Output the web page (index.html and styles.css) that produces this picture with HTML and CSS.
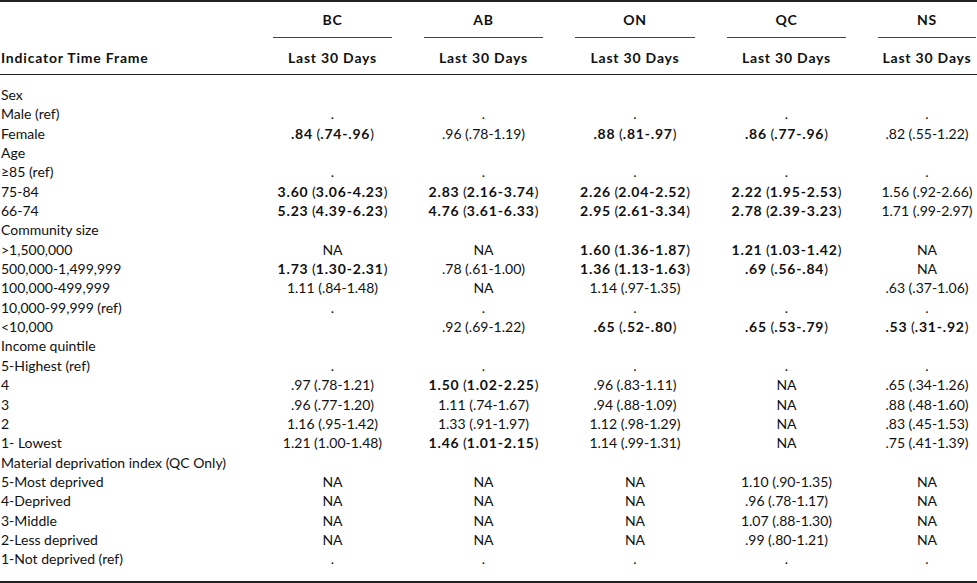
FILE: index.html
```html
<!DOCTYPE html>
<html lang="en">
<head>
<meta charset="utf-8">
<title>Indicator table</title>
<link rel="stylesheet" href="styles.css">
</head>
<body>
<table class="tbl">
  <colgroup>
    <col class="c-label"><col class="c-bc"><col class="c-ab"><col class="c-on"><col class="c-qc"><col class="c-ns">
  </colgroup>
  <thead>
    <tr class="h1">
      <th></th>
      <th><div class="grp">BC</div></th>
      <th><div class="grp">AB</div></th>
      <th><div class="grp">ON</div></th>
      <th><div class="grp">QC</div></th>
      <th><div class="grp">NS</div></th>
    </tr>
    <tr class="h2">
      <th class="lbl">Indicator Time Frame</th>
      <th>Last 30 Days</th>
      <th>Last 30 Days</th>
      <th>Last 30 Days</th>
      <th>Last 30 Days</th>
      <th>Last 30 Days</th>
    </tr>
  </thead>
  <tbody>
    <tr><td>Sex</td><td></td><td></td><td></td><td></td><td></td></tr>
    <tr><td>Male (ref)</td><td>.</td><td>.</td><td>.</td><td>.</td><td>.</td></tr>
    <tr><td>Female</td><td><b>.84</b> (<b>.74-.96</b>)</td><td>.96 (.78-1.19)</td><td><b>.88</b> (<b>.81-.97</b>)</td><td><b>.86</b> (<b>.77-.96</b>)</td><td>.82 (.55-1.22)</td></tr>
    <tr><td>Age</td><td></td><td></td><td></td><td></td><td></td></tr>
    <tr><td>&ge;85 (ref)</td><td>.</td><td>.</td><td>.</td><td>.</td><td>.</td></tr>
    <tr><td>75-84</td><td><b>3.60</b> (<b>3.06-4.23</b>)</td><td><b>2.83</b> (<b>2.16-3.74</b>)</td><td><b>2.26</b> (<b>2.04-2.52</b>)</td><td><b>2.22</b> (<b>1.95-2.53</b>)</td><td>1.56 (.92-2.66)</td></tr>
    <tr><td>66-74</td><td><b>5.23</b> (<b>4.39-6.23</b>)</td><td><b>4.76</b> (<b>3.61-6.33</b>)</td><td><b>2.95</b> (<b>2.61-3.34</b>)</td><td><b>2.78</b> (<b>2.39-3.23</b>)</td><td>1.71 (.99-2.97)</td></tr>
    <tr><td>Community size</td><td></td><td></td><td></td><td></td><td></td></tr>
    <tr><td>&gt;1,500,000</td><td>NA</td><td>NA</td><td><b>1.60</b> (<b>1.36-1.87</b>)</td><td><b>1.21</b> (<b>1.03-1.42</b>)</td><td>NA</td></tr>
    <tr><td>500,000-1,499,999</td><td><b>1.73</b> (<b>1.30-2.31</b>)</td><td>.78 (.61-1.00)</td><td><b>1.36</b> (<b>1.13-1.63</b>)</td><td><b>.69</b> (<b>.56-.84</b>)</td><td>NA</td></tr>
    <tr><td>100,000-499,999</td><td>1.11 (.84-1.48)</td><td>NA</td><td>1.14 (.97-1.35)</td><td></td><td>.63 (.37-1.06)</td></tr>
    <tr><td>10,000-99,999 (ref)</td><td>.</td><td>.</td><td>.</td><td>.</td><td>.</td></tr>
    <tr><td>&lt;10,000</td><td></td><td>.92 (.69-1.22)</td><td><b>.65</b> (<b>.52-.80</b>)</td><td><b>.65</b> (<b>.53-.79</b>)</td><td><b>.53</b> (<b>.31-.92</b>)</td></tr>
    <tr><td>Income quintile</td><td></td><td></td><td></td><td></td><td></td></tr>
    <tr><td>5-Highest (ref)</td><td>.</td><td>.</td><td>.</td><td>.</td><td>.</td></tr>
    <tr><td>4</td><td>.97 (.78-1.21)</td><td><b>1.50</b> (<b>1.02-2.25</b>)</td><td>.96 (.83-1.11)</td><td>NA</td><td>.65 (.34-1.26)</td></tr>
    <tr><td>3</td><td>.96 (.77-1.20)</td><td>1.11 (.74-1.67)</td><td>.94 (.88-1.09)</td><td>NA</td><td>.88 (.48-1.60)</td></tr>
    <tr><td>2</td><td>1.16 (.95-1.42)</td><td>1.33 (.91-1.97)</td><td>1.12 (.98-1.29)</td><td>NA</td><td>.83 (.45-1.53)</td></tr>
    <tr><td>1- Lowest</td><td>1.21 (1.00-1.48)</td><td><b>1.46</b> (<b>1.01-2.15</b>)</td><td>1.14 (.99-1.31)</td><td>NA</td><td>.75 (.41-1.39)</td></tr>
    <tr><td>Material deprivation index (QC Only)</td><td></td><td></td><td></td><td></td><td></td></tr>
    <tr><td>5-Most deprived</td><td>NA</td><td>NA</td><td>NA</td><td>1.10 (.90-1.35)</td><td>NA</td></tr>
    <tr><td>4-Deprived</td><td>NA</td><td>NA</td><td>NA</td><td>.96 (.78-1.17)</td><td>NA</td></tr>
    <tr><td>3-Middle</td><td>NA</td><td>NA</td><td>NA</td><td>1.07 (.88-1.30)</td><td>NA</td></tr>
    <tr><td>2-Less deprived</td><td>NA</td><td>NA</td><td>NA</td><td>.99 (.80-1.21)</td><td>NA</td></tr>
    <tr><td>1-Not deprived (ref)</td><td>.</td><td>.</td><td>.</td><td>.</td><td>.</td></tr>
  </tbody>
</table>
</body>
</html>
```

FILE: styles.css
```css
html, body {
  margin: 0;
  padding: 0;
  background: #fff;
  overflow: hidden;
}

body {
  font-family: Lato, "Noto Sans", sans-serif;
  font-size: 14px;
  color: #111;
}

.tbl {
  table-layout: fixed;
  width: 992px;
  border-collapse: collapse;
  border-top: 2px solid #222;
  border-bottom: 2px solid #222;
}

.c-label { width: 257px; }
.c-bc { width: 151px; }
.c-ab { width: 151px; }
.c-on { width: 152px; }
.c-qc { width: 151px; }
.c-ns { width: 130px; }

th, td {
  padding: 0;
  font-weight: normal;
  white-space: nowrap;
}

thead th {
  font-weight: bold;
  text-align: center;
  line-height: 19px;
  letter-spacing: 0.8px;
}

.h1 th {
  padding: 0 16px;
}

.grp {
  padding: 8px 0 8px;
  border-bottom: 1.5px solid #444;
}

.h2 th {
  padding: 10px 0 7px;
  border-bottom: 1.5px solid #222;
}

.h2 th.lbl {
  text-align: left;
  padding-left: 1px;
}

tbody td {
  line-height: 19.35px;
  text-align: center;
}

tbody td:first-child {
  text-align: left;
  padding-left: 1px;
}

tbody tr:first-child td {
  padding-top: 10px;
}

tbody tr:last-child td {
  padding-bottom: 12px;
}

b {
  font-weight: bold;
  letter-spacing: 0.8px;
}
```
